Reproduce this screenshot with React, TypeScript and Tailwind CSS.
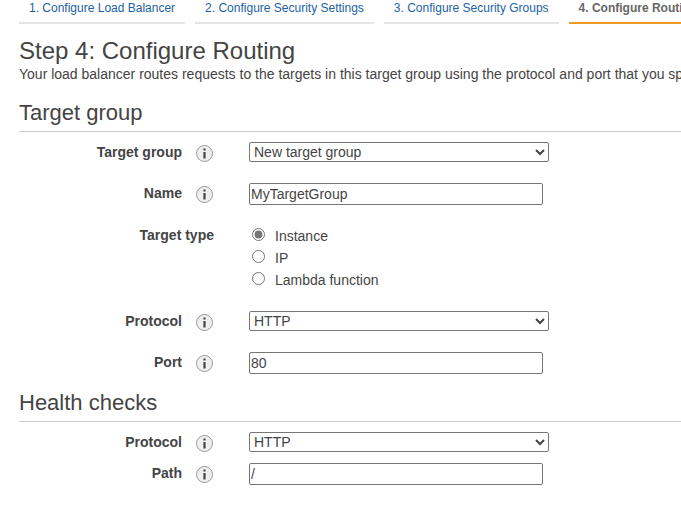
import type { ReactNode } from "react";

const steps = [
  "1. Configure Load Balancer",
  "2. Configure Security Settings",
  "3. Configure Security Groups",
  "4. Configure Routing",
];
const currentStep = 3;

function InfoButton({ topic }: { topic: string }) {
  return (
    <button type="button" aria-label={`About ${topic}`} className="mt-[3px] size-[17px] shrink-0">
      <svg viewBox="0 0 17 17" className="block size-full">
        <circle cx="8.5" cy="8.5" r="8" fill="#efefef" stroke="#999" />
        <path d="M7.4 3.6h2.2v2H7.4zM7.4 7h2.2v6.4H7.4z" fill="#444" />
      </svg>
    </button>
  );
}

function Row({ id, label, children }: { id: string; label: string; children: ReactNode }) {
  return (
    <div className="flex min-h-[21px] items-start">
      <div className="mr-9 flex w-[194px] shrink-0 justify-end gap-[14px]">
        <label htmlFor={id} className="font-bold">
          {label}
        </label>
        <InfoButton topic={label} />
      </div>
      {children}
    </div>
  );
}

function SelectRow({ id, label, options }: { id: string; label: string; options: string[] }) {
  return (
    <Row id={id} label={label}>
      <select
        id={id}
        className="h-5 w-[300px] min-w-0 rounded-[2px] border border-[#767676] bg-white text-sm/4"
      >
        {options.map((option) => (
          <option key={option}>{option}</option>
        ))}
      </select>
    </Row>
  );
}

function TextRow({ id, label, value }: { id: string; label: string; value: string }) {
  return (
    <Row id={id} label={label}>
      <input
        id={id}
        type="text"
        defaultValue={value}
        className="h-[22px] w-[294px] min-w-0 rounded-[2px] border border-[#767676] bg-white px-px text-sm/4"
      />
    </Row>
  );
}

function SectionTitle({ children }: { children: ReactNode }) {
  return (
    <h2 className="mb-[10px] border-b border-[#ccc] pb-[5px] text-[22px]/[26px]">{children}</h2>
  );
}

export default function App() {
  return (
    <div className="min-h-screen overflow-hidden bg-white pl-[19px] font-['Liberation_Sans',Arial,sans-serif] text-sm/5 text-[#444]">
      <nav aria-label="Wizard steps" className="flex gap-[10px] overflow-hidden whitespace-nowrap text-xs/4">
        {steps.map((step, i) =>
          i === currentStep ? (
            <a
              key={step}
              href="#"
              aria-current="step"
              className="shrink-0 border-b-2 border-[#f29a26] px-[10px] pb-[6px] font-bold text-[#666]"
            >
              {step}
            </a>
          ) : (
            <a
              key={step}
              href="#"
              className="shrink-0 border-b-2 border-[#e6e6e6] px-[10px] pb-[6px] text-[#1b62a5]"
            >
              {step}
            </a>
          ),
        )}
      </nav>

      <main>
        <h1 className="mt-[13px] text-2xl/[27px]">Step 4: Configure Routing</h1>
        <p className="overflow-hidden whitespace-nowrap">
          Your load balancer routes requests to the targets in this target group using the protocol and port that you
          specify here.
        </p>

        <form onSubmit={(e) => e.preventDefault()}>
          <section className="mt-4">
            <SectionTitle>Target group</SectionTitle>
            <div className="flex flex-col gap-5">
              <SelectRow id="target-group" label="Target group" options={["New target group", "Existing target group"]} />
              <TextRow id="name" label="Name" value="MyTargetGroup" />
              <div role="radiogroup" aria-labelledby="target-type" className="flex items-start">
                <div id="target-type" className="mr-[38px] w-[195px] shrink-0 text-right font-bold">
                  Target type
                </div>
                <div className="flex flex-col">
                  {["Instance", "IP", "Lambda function"].map((type, i) => (
                    <label key={type} className="flex h-[22px] items-start gap-[10px] leading-[22px]">
                      <input
                        type="radio"
                        name="target-type"
                        defaultChecked={i === 0}
                        className="mt-[3px] size-[13px] accent-[#767676]"
                      />
                      {type}
                    </label>
                  ))}
                </div>
              </div>
              <SelectRow id="protocol" label="Protocol" options={["HTTP", "HTTPS"]} />
              <TextRow id="port" label="Port" value="80" />
            </div>
          </section>

          <section className="mt-4">
            <SectionTitle>Health checks</SectionTitle>
            <div className="flex flex-col gap-[10px]">
              <SelectRow id="health-protocol" label="Protocol" options={["HTTP", "HTTPS"]} />
              <TextRow id="health-path" label="Path" value="/" />
            </div>
          </section>
        </form>
      </main>
    </div>
  );
}
